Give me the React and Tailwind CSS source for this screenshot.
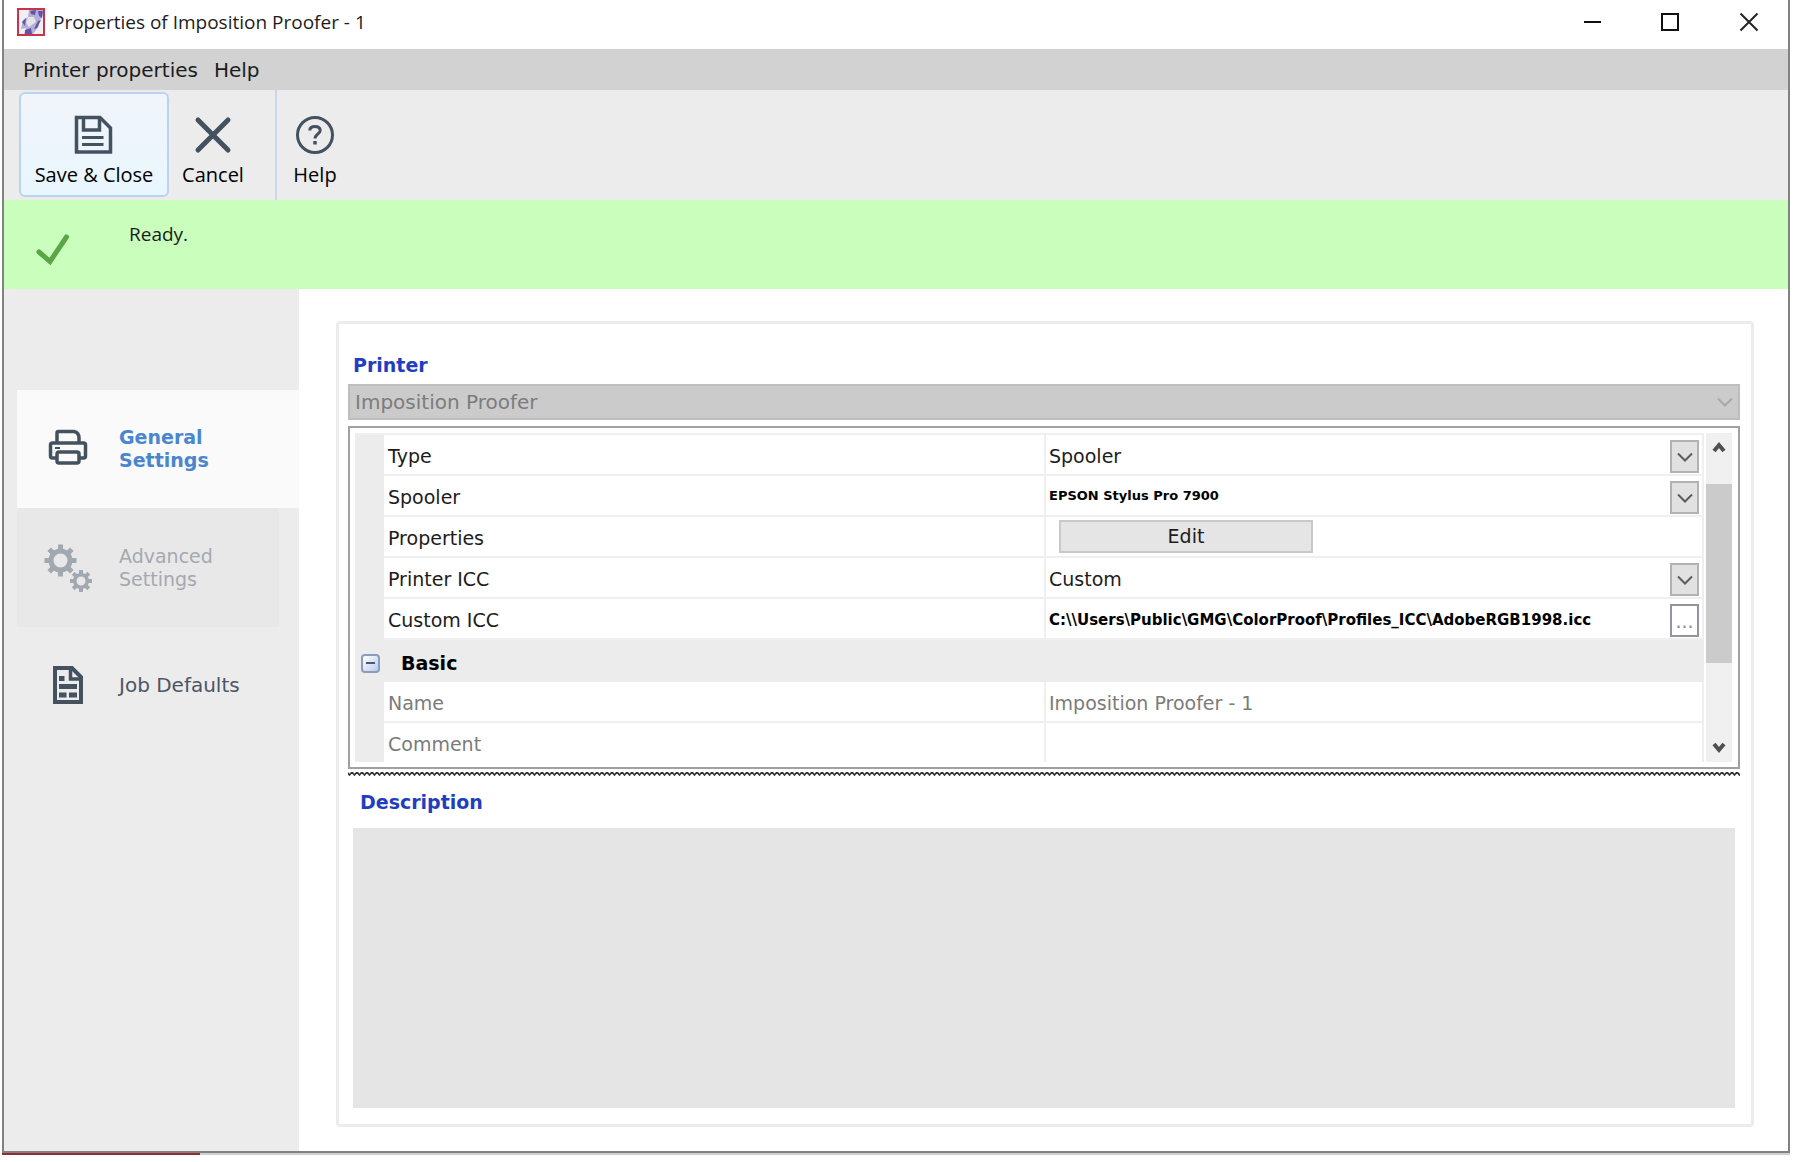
import React, { useState } from 'react';

const menuItems = ['Printer properties', 'Help'];

const selectOptions = {
  Type: ['Spooler', 'File'],
  Spooler: ['EPSON Stylus Pro 7900'],
  'Printer ICC': ['Custom', 'Default'],
};

const SaveIcon = () => (
  <svg className="h-10 w-10" viewBox="0 0 40 40" fill="none" stroke="#44515f" strokeWidth="3.5">
    <path d="M2.500 2.500H26L36.500 13V37H2.500Z" />
    <path d="M9.500 3V15H25.500V3" />
    <path d="M8 22.500H29.500M8 29.500H29.500" strokeWidth="3" />
  </svg>
);

const CancelIcon = () => (
  <svg className="h-10 w-10" viewBox="0 0 40 40" stroke="#44515f" strokeWidth="5" strokeLinecap="round">
    <path d="M5 5L35 35M35 5L5 35" />
  </svg>
);

const HelpIcon = () => (
  <svg className="h-10 w-10" viewBox="0 0 40 40" fill="none" stroke="#44515f">
    <circle cx="20" cy="20" r="17.500" strokeWidth="3" />
    <path d="M14.800 15.500C14.800 12.500 17 11.500 20 11.500C23 11.500 25.200 12.800 25.200 15.500C25.200 18.500 20 19.500 20 23.500" strokeWidth="3" />
    <path d="M20 26V29.500" strokeWidth="3.500" />
  </svg>
);

const CheckIcon = () => (
  <svg className="h-9 w-9" viewBox="0 0 36 36" fill="none" stroke="#5aa545" strokeWidth="5" strokeLinecap="round">
    <path d="M4 20L15 29.500L31.500 5" />
  </svg>
);

const PrinterIcon = () => (
  <svg className="mb-1 h-9 w-10" viewBox="0 0 40 36" fill="none" stroke="#44515f" strokeWidth="3.5">
    <path d="M9 13.500V4Q9 2.500 10.500 2.500H26Q31 3.500 31 9V13.500" />
    <path d="M9 29H4.500Q2.500 29 2.500 27V16Q2.500 14 4.500 14H35.500Q37.500 14 37.500 16V27Q37.500 29 35.500 29H31" />
    <rect x="9" y="23" width="22" height="11" rx="2" />
    <path d="M7 19H12" strokeWidth="2" />
  </svg>
);

const Gear = ({ cx, cy, r, hole, tooth }) => (
  <g transform={`translate(${cx} ${cy})`} stroke="#a2a8af" fill="none">
    <circle r={(r + hole) / 2} strokeWidth={r - hole} />
    {[0, 45, 90, 135, 180, 225, 270, 315].map((a) => (
      <path key={a} d={`M0 ${-r + 1}V${-r - tooth}`} strokeWidth={tooth + 1} transform={`rotate(${a})`} />
    ))}
  </g>
);

const GearsIcon = () => (
  <svg className="h-12 w-12" viewBox="0 0 48 48">
    <Gear cx={16.5} cy={16.5} r={12} hole={7} tooth={4} />
    <Gear cx={37} cy={37} r={8} hole={4.5} tooth={3} />
  </svg>
);

const JobIcon = () => (
  <svg className="h-10 w-8" viewBox="0 0 32 40" fill="none" stroke="#44515f" strokeWidth="4">
    <path d="M3 3H20L29 12V37H3Z" />
    <path d="M18.500 3V14H29" strokeWidth="3.500" />
    <path d="M7 13.500H12.500" strokeWidth="5" />
    <path d="M7 21.500H25" strokeWidth="5" />
    <path d="M7 30H14.500M17 30H25" strokeWidth="5" />
  </svg>
);

const Chevron = ({ color }) => (
  <svg className="h-4 w-4" viewBox="0 0 16 16" fill="none" stroke={color} strokeWidth="2">
    <path d="M1 4.500L8 11.500L15 4.500" />
  </svg>
);

const ScrollArrow = ({ up }) => (
  <svg className="h-4 w-4" viewBox="0 0 16 16" fill="none" stroke="#505050" strokeWidth="4">
    <path d={up ? 'M3 12L8 6L13 12' : 'M3 4L8 10L13 4'} />
  </svg>
);

const ToolButton = ({ icon, label, className }) => (
  <button className={`flex flex-col items-center border-2 pt-[21px] font-['Open_Sans',sans-serif] text-[20px] leading-6 ${className}`}>
    {icon}
    <span className="mt-2">{label}</span>
  </button>
);

const NavItem = ({ icon, label, className }) => (
  <button className={`flex items-center text-left ${className}`}>
    <span className="flex w-[102px] shrink-0 justify-center">{icon}</span>
    <span className="w-32 leading-[23px]">{label}</span>
  </button>
);

const SelectCell = ({ name, bold }) => {
  const [value, setValue] = useState(selectOptions[name][0]);
  return (
    <div className="relative flex h-full items-center pt-1">
      <select
        id={name}
        value={value}
        onChange={(e) => setValue(e.target.value)}
        className={`h-full w-full appearance-none bg-transparent pr-10 outline-none ${bold ? 'pb-1 text-[13px] font-bold text-black' : ''}`}
      >
        {selectOptions[name].map((o) => (
          <option key={o}>{o}</option>
        ))}
      </select>
      <span className="pointer-events-none absolute right-[3px] flex h-[33px] w-[29px] items-center justify-center border-2 border-[#b2b2b2] bg-[#e1e1e1]">
        <Chevron color="#5c5c5c" />
      </span>
    </div>
  );
};

const Row = ({ label, htmlFor, muted, children }) => (
  <tr className={`h-[41px] ${muted ? 'text-[#7b7b7b]' : 'text-[#1c1c1c]'}`}>
    <td className="w-[29px] bg-[#ececec] p-0"></td>
    <th scope="row" className="border-b-2 border-[#efefef] p-0 pt-1 pl-1 text-left font-normal">
      <label htmlFor={htmlFor}>{label}</label>
    </th>
    <td className="h-[41px] border-x-2 border-b-2 border-[#efefef] p-0 pl-[3px]">{children}</td>
  </tr>
);

const App = () => {
  const [open, setOpen] = useState(true);

  return (
    <div className="h-screen bg-white pr-2 pb-[7px] pl-[2px] font-['DejaVu_Sans',sans-serif] text-[19px] text-[#1c1c1c]">
      <div className="flex h-full flex-col">
        <div className="flex min-h-0 flex-1 flex-col border-x-2 border-b-2 border-[#828282] bg-white">
          <header className="flex h-[49px] shrink-0 items-center pb-[5px] pl-[13px]">
            <svg className="h-7 w-7" viewBox="0 0 28 28">
              <rect x="1" y="1" width="26" height="26" fill="#f1eef4" stroke="#c8334a" strokeWidth="2" />
              <path d="M12 2H26L25 10L21 14L22 18L16 26H7L9 20L4 21L6 12L11 9Z" fill="#b5afd8" />
              <path d="M13 3L19 2L18 7L14 6ZM21 3H26L25 10L22 8ZM5 14L9 10L8 18ZM21 13L24 12L20 20L17 21ZM8 22L14 20L15 26L8 26Z" fill="#5f55a8" />
              <path d="M11 9L17 9L19 14L12 19L9 15Z" fill="#e6e2e6" />
            </svg>
            <h1 className="ml-2 flex-1 font-['Open_Sans',sans-serif] text-[19px]">Properties of Imposition Proofer - 1</h1>
            <div className="flex">
              <button aria-label="Minimize" className="flex h-11 w-[78px] items-center justify-center">
                <svg className="h-5 w-5" viewBox="0 0 20 20" stroke="#111" strokeWidth="2"><path d="M1 10H18" /></svg>
              </button>
              <button aria-label="Maximize" className="flex h-11 w-[78px] items-center justify-center">
                <svg className="h-5 w-5" viewBox="0 0 20 20" fill="none" stroke="#111" strokeWidth="2"><path d="M1 2H17V18H1Z" /></svg>
              </button>
              <button aria-label="Close" className="flex h-11 w-[78px] items-center justify-center">
                <svg className="h-5 w-5" viewBox="0 0 20 20" stroke="#222" strokeWidth="2"><path d="M1.500 1.500L18.500 18.500M18.500 1.500L1.500 18.500" /></svg>
              </button>
            </div>
          </header>

          <nav className="flex h-[41px] shrink-0 items-center gap-4 bg-[#d2d2d2] pl-[19px] text-[20px]">
            {menuItems.map((item) => (
              <button key={item}>{item}</button>
            ))}
          </nav>

          <div className="flex h-[110px] shrink-0 bg-[#ececec] pl-[15px] text-black">
            <ToolButton
              icon={<SaveIcon />}
              label="Save & Close"
              className="mt-[2px] h-[105px] w-[150px] rounded-md border-[#b9d3f0] bg-linear-to-b from-[#f1f4fb] to-[#e9f6fd]"
            />
            <ToolButton icon={<CancelIcon />} label="Cancel" className="mt-[2px] w-[88px] border-transparent" />
            <div className="ml-[18px] w-[2px] bg-[#c5d8ec]"></div>
            <ToolButton icon={<HelpIcon />} label="Help" className="mt-[2px] w-[76px] border-transparent" />
          </div>

          <div className="flex h-[89px] shrink-0 bg-[#c9febd]">
            <div className="w-[125px] pt-8 pl-[31px]"><CheckIcon /></div>
            <p className="pt-5 font-['Open_Sans',sans-serif] leading-7" role="status">Ready.</p>
          </div>

          <div className="flex min-h-0 flex-1">
            <aside className="w-[295px] shrink-0 bg-[#ececec] pt-[101px] pl-[13px]">
              <NavItem icon={<PrinterIcon />} label="General Settings" className="h-[118px] w-full bg-[#fafafa] font-bold text-[#4a86cf]" />
              <NavItem icon={<GearsIcon />} label="Advanced Settings" className="h-[119px] w-[262px] bg-[#e8e8e8] text-[#a5a8b0]" />
              <NavItem
                icon={<JobIcon />}
                label={<span className="whitespace-nowrap">Job Defaults</span>}
                className="h-[116px] w-full text-[20px] text-[#4c5566]"
              />
            </aside>

            <main className="flex min-w-0 flex-1 pt-8 pr-[34px] pb-6 pl-[37px]">
              <section className="flex min-w-0 flex-1 flex-col rounded-sm border-3 border-[#ececec] pr-[11px] pb-4 pl-[9px]">
                <label htmlFor="printer" className="mt-[25px] mb-[3px] pl-[5px] leading-8 font-bold text-[#1f3fc0]">Printer</label>
                <div className="relative flex shrink-0 items-center">
                  <select
                    id="printer"
                    disabled
                    className="h-9 w-full appearance-none border-2 border-[#bebebe] bg-[#cbcbcb] pl-[5px] text-[20px] text-[#7c7c7c] opacity-100"
                  >
                    <option>Imposition Proofer</option>
                  </select>
                  <span className="pointer-events-none absolute right-[7px]"><Chevron color="#a9a9a9" /></span>
                </div>

                <div className="mt-[6px] flex h-[343px] shrink-0 border-2 border-[#a0a0a0] py-[5px] pr-[6px] pl-[5px]">
                  <div className="min-w-0 flex-1 overflow-hidden">
                    <table className="w-full table-fixed border-separate border-spacing-0 border-t-2 border-[#efefef]">
                      <colgroup>
                        <col className="w-[29px]" />
                        <col />
                        <col />
                      </colgroup>
                      <tbody>
                        <Row label="Type" htmlFor="Type"><SelectCell name="Type" /></Row>
                        <Row label="Spooler" htmlFor="Spooler"><SelectCell name="Spooler" bold /></Row>
                        <Row label="Properties">
                          <button className="ml-[10px] flex h-[33px] w-[254px] items-center justify-center border-2 border-[#c9c9c9] bg-[#e5e5e5]">
                            Edit
                          </button>
                        </Row>
                        <Row label="Printer ICC" htmlFor="Printer ICC"><SelectCell name="Printer ICC" /></Row>
                        <Row label="Custom ICC" htmlFor="custom-icc">
                          <div className="flex h-full items-center pt-1 pr-[3px]">
                            <input
                              id="custom-icc"
                              defaultValue="C:\\Users\Public\GMG\ColorProof\Profiles_ICC\AdobeRGB1998.icc"
                              className="min-w-0 flex-1 bg-transparent text-[15px] font-bold text-black outline-none"
                            />
                            <button className="flex h-[33px] w-[29px] items-end justify-center border-2 border-[#9494a0] bg-white text-[#8c8c8c]">...</button>
                          </div>
                        </Row>
                        <tr className="h-[42px] bg-[#ececec] text-black">
                          <td className="p-0 pt-1 pl-[6px]">
                            <button
                              aria-label="Toggle Basic"
                              onClick={() => setOpen(!open)}
                              className="flex h-[19px] w-[19px] items-center justify-center rounded-sm border-2 border-[#8b9dbd] bg-linear-to-br from-white to-[#bccbea]"
                            >
                              <span className="h-[2px] w-[9px] bg-[#48587c]"></span>
                            </button>
                          </td>
                          <th colSpan="2" className="p-0 pt-1 pl-[17px] text-left font-bold">Basic</th>
                        </tr>
                        {open && (
                          <>
                            <Row label="Name" htmlFor="name" muted>
                              <input id="name" readOnly defaultValue="Imposition Proofer - 1" className="w-full bg-transparent pt-1 outline-none" />
                            </Row>
                            <Row label="Comment" htmlFor="comment" muted>
                              <input id="comment" readOnly className="w-full bg-transparent pt-1 outline-none" />
                            </Row>
                          </>
                        )}
                      </tbody>
                    </table>
                  </div>
                  <div className="ml-[2px] flex w-[26px] shrink-0 flex-col items-center bg-[#f0f0f0]">
                    <button aria-label="Scroll up" className="flex h-[51px] items-start pt-[6px]"><ScrollArrow up /></button>
                    <div className="h-[179px] w-full bg-[#cbcbcb]"></div>
                    <button aria-label="Scroll down" className="mt-auto flex items-end pb-[6px]"><ScrollArrow /></button>
                  </div>
                </div>

                <svg className="mt-[3px] h-1 w-full shrink-0">
                  <defs>
                    <pattern id="zigzag" width="5" height="4" patternUnits="userSpaceOnUse">
                      <path d="M-1 0L1.500 3L4 0L6.500 3" fill="none" stroke="#333" strokeWidth="1.600" />
                    </pattern>
                  </defs>
                  <rect width="100%" height="4" fill="url(#zigzag)" />
                </svg>

                <h2 className="mt-2 pl-3 leading-9 font-bold text-[#1f3fc0]">Description</h2>
                <div className="mr-[5px] ml-[5px] mt-2 flex-1 bg-[#e5e5e5]"></div>
              </section>
            </main>
          </div>
        </div>
        <div className="flex h-[2px] shrink-0 bg-[#cfcfcf]">
          <div className="w-[198px] bg-[#8f3030]"></div>
        </div>
      </div>
    </div>
  );
};

export default App;
